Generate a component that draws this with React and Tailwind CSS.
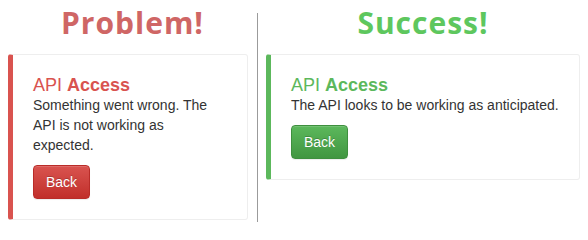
const callouts = [
  {
    heading: "Problem!",
    headingColor: "text-[#cf6665]",
    bar: "border-l-[#d9534f]",
    title: "text-[#d9534f]",
    text: "Something went wrong. The API is not working as expected.",
    width: "w-[240px]",
    button:
      "border-[#b92c28] bg-gradient-to-b from-[#d9534f] to-[#c12e2a]",
  },
  {
    heading: "Success!",
    headingColor: "text-[#5ec75e]",
    bar: "border-l-[#5cb85c]",
    title: "text-[#5cb85c]",
    text: "The API looks to be working as anticipated.",
    width: "w-[314px]",
    button:
      "border-[#3e8f3e] bg-gradient-to-b from-[#5cb85c] to-[#419641]",
  },
]

function Callout({ item }) {
  return (
    <div className="flex flex-col">
      <h1
        className={`mt-[6px] h-[33px] text-center text-[30px] leading-[33px] font-bold tracking-[1px] ${item.headingColor}`}
        style={{ fontFamily: '"Open Sans", sans-serif' }}
      >
        {item.heading}
      </h1>
      <div
        className={`mt-[15px] ${item.width} rounded-[3px] border border-[#eee] border-l-[5px] ${item.bar} bg-white p-5`}
      >
        <h4 className={`text-[18px] leading-[20px] ${item.title}`}>
          API <b>Access</b>
        </h4>
        <p className="text-[14px] leading-[20px] text-[#333]">{item.text}</p>
        <button
          className={`mt-[10px] h-[34px] rounded-[4px] border px-3 text-[14px] leading-[20px] text-white shadow-[inset_0_1px_0_rgba(255,255,255,0.15),0_1px_1px_rgba(0,0,0,0.075)] [text-shadow:0_-1px_0_rgba(0,0,0,0.2)] ${item.button}`}
        >
          Back
        </button>
      </div>
    </div>
  )
}

export default function App() {
  return (
    <div
      className="flex h-[233px] w-[588px] bg-white"
      style={{ fontFamily: '"Liberation Sans", Arial, sans-serif' }}
    >
      <div className="w-[257px] pl-2">
        <Callout item={callouts[0]} />
      </div>
      <div className="mt-[13px] h-[209px] w-px bg-[#9b9b9b]" />
      <div className="pl-2">
        <Callout item={callouts[1]} />
      </div>
    </div>
  )
}
